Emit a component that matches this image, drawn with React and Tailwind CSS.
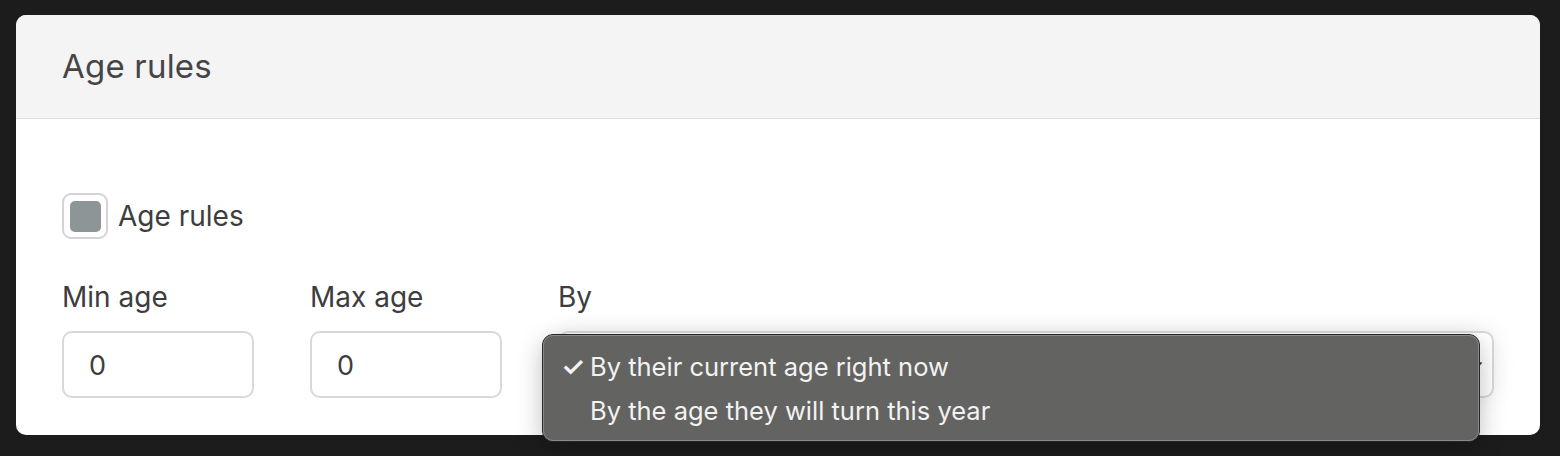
import React from "react";

const Field = ({ label, value, width }) => (
  <div className="flex flex-col" style={{ width }}>
    <label className="text-[28px] leading-[32px] text-[#3d3d40] mb-[18px]">{label}</label>
    <div className="h-[67px] border-2 border-[#d9d9dc] rounded-[10px] bg-white flex items-center pl-[25px] pt-[3px] text-[27px] text-[#3d3d40]">
      {value}
    </div>
  </div>
);

const App = () => {
  return (
    <div
      className="w-[1560px] h-[456px] bg-[#1c1c1c] pt-[15px] px-[16px] overflow-hidden"
      style={{ fontFamily: "Inter, 'Noto Sans', sans-serif" }}
    >
      <div className="w-[1524px] h-[420px] bg-white rounded-[10px] relative">
        <div className="h-[104px] bg-[#f4f4f4] border-b border-[#dedede] rounded-t-[10px] flex items-center px-[46px]">
          <h1 className="text-[33px] text-[#454545] font-normal tracking-[0.2px]">Age rules</h1>
        </div>

        <div className="px-[46px] pt-[74px]">
          <div className="flex items-center gap-[10px]">
            <div className="w-[46px] h-[46px] border-2 border-[#d4d4d8] rounded-[9px] flex items-center justify-center">
              <div className="w-[31px] h-[31px] bg-[#8e9597] rounded-[5px]" />
            </div>
            <span className="text-[28px] text-[#3d3d40]">Age rules</span>
          </div>

          <div className="flex gap-[56px] mt-[42px]">
            <Field label="Min age" value="0" width={192} />
            <Field label="Max age" value="0" width={192} />
            <div className="flex flex-col flex-1 relative">
              <label className="text-[28px] leading-[32px] text-[#3d3d40] mb-[18px]">By</label>
              <div className="h-[67px] w-[936px] border-2 border-[#d9d9dc] rounded-[10px] bg-white flex items-center justify-end pr-[8px] shadow-[0_0_24px_rgba(0,0,0,0.08)]">
                <svg width="14" height="14" viewBox="0 0 14 14" className="text-[#444]">
                  <path d="M3 5l4 4 4-4" fill="none" stroke="currentColor" strokeWidth="1.8" strokeLinecap="round" />
                </svg>
              </div>

              <div className="absolute left-[-16px] top-[53px] w-[938px] h-[108px] rounded-[11px] border border-[#262626] bg-[#636361] shadow-[0_8px_24px_rgba(0,0,0,0.25)]">
                <div className="h-full rounded-[10px] border border-[#8a8a88] pt-[9px] flex flex-col text-[25.5px] text-[#f2f2f2]">
                  <div className="h-[44px] flex items-center">
                    <span className="w-[46px] pl-[17px] text-[27px] font-semibold">✓</span>
                    <span>By their current age right now</span>
                  </div>
                  <div className="h-[44px] flex items-center">
                    <span className="w-[46px]" />
                    <span>By the age they will turn this year</span>
                  </div>
                </div>
              </div>
            </div>
          </div>
        </div>
      </div>
    </div>
  );
};

export default App;
